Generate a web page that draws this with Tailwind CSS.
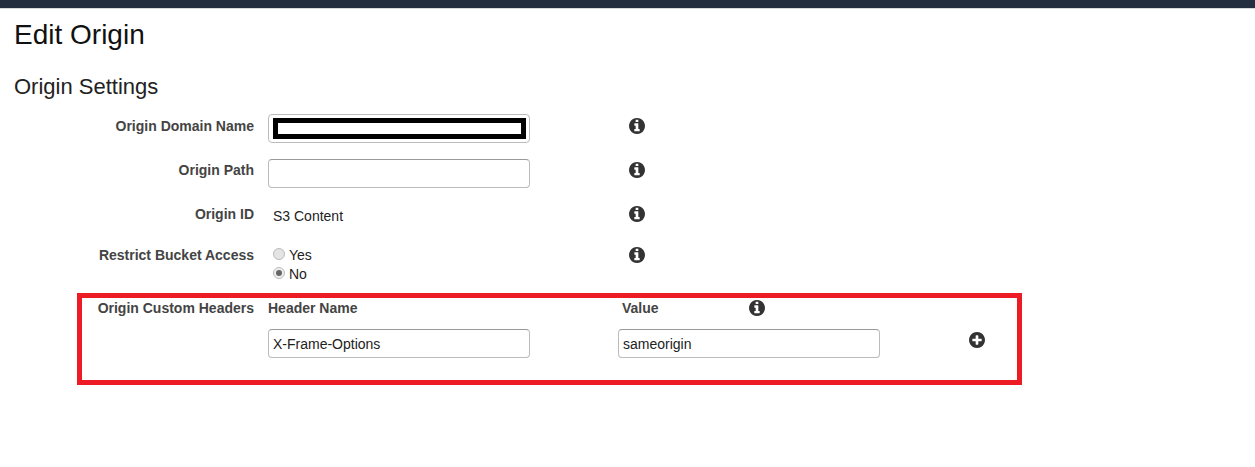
<!DOCTYPE html>
<html lang="en">
<head>
  <meta charset="UTF-8" />
  <title>Edit Origin</title>
  <script src="https://cdn.jsdelivr.net/npm/@tailwindcss/browser@4"></script>
</head>
<body class="bg-white font-['Liberation_Sans',Arial,sans-serif] text-[#222]">
  <div class="h-2 bg-[#232f3e] border-b border-[#d5dbdb] box-content"></div>

  <main class="h-[458px] overflow-hidden">
    <h1 class="pl-[14px] pt-[9px] text-[28px] leading-[34px] text-[#111]">Edit Origin</h1>
    <h2 class="pl-[14px] pt-[22px] text-[22px] leading-[26px] text-[#222]">Origin Settings</h2>

    <!-- Origin Domain Name -->
    <div class="flex items-start h-[45px] mt-[14px]">
      <label class="w-[254px] text-right text-sm font-bold text-[#444] leading-[24px]">Origin Domain Name</label>
      <div class="ml-[14px] w-[262px] h-[29px] rounded border border-[#bbb] p-[3px] pl-[4px]">
        <div class="w-[253px] h-[21px] border-[5px] border-black bg-white"></div>
      </div>
      <svg class="ml-[99px] mt-[4px] w-4 h-4 fill-[#333]" viewBox="128 128 1536 1536"><path d="M1152 1376v-160q0-14-9-23t-23-9h-96v-512q0-14-9-23t-23-9h-320q-14 0-23 9t-9 23v160q0 14 9 23t23 9h96v320h-96q-14 0-23 9t-9 23v160q0 14 9 23t23 9h448q14 0 23-9t9-23zm-128-896v-160q0-14-9-23t-23-9h-192q-14 0-23 9t-9 23v160q0 14 9 23t23 9h192q14 0 23-9t9-23zm640 416q0 209-103 385.5t-279.5 279.5-385.5 103-385.5-103-279.5-279.5-103-385.5 103-385.5 279.5-279.5 385.5-103 385.5 103 279.5 279.5 103 385.5z"/></svg>
    </div>

    <!-- Origin Path -->
    <div class="flex items-start h-[44px]">
      <label class="w-[254px] text-right text-sm font-bold text-[#444] leading-[23px]">Origin Path</label>
      <input class="ml-[14px] w-[262px] h-[29px] rounded border border-[#bbb] border-t-[#999] px-1 text-sm" />
      <svg class="ml-[99px] mt-[3px] w-4 h-4 fill-[#333]" viewBox="128 128 1536 1536"><path d="M1152 1376v-160q0-14-9-23t-23-9h-96v-512q0-14-9-23t-23-9h-320q-14 0-23 9t-9 23v160q0 14 9 23t23 9h96v320h-96q-14 0-23 9t-9 23v160q0 14 9 23t23 9h448q14 0 23-9t9-23zm-128-896v-160q0-14-9-23t-23-9h-192q-14 0-23 9t-9 23v160q0 14 9 23t23 9h192q14 0 23-9t9-23zm640 416q0 209-103 385.5t-279.5 279.5-385.5 103-385.5-103-279.5-279.5-103-385.5 103-385.5 279.5-279.5 385.5-103 385.5 103 279.5 279.5 103 385.5z"/></svg>
    </div>

    <!-- Origin ID -->
    <div class="flex items-start h-[40px]">
      <label class="w-[254px] text-right text-sm font-bold text-[#444] leading-[23px]">Origin ID</label>
      <span class="ml-[19px] w-[257px] text-sm leading-[27px] text-[#222]">S3 Content</span>
      <svg class="ml-[99px] mt-[3px] w-4 h-4 fill-[#333]" viewBox="128 128 1536 1536"><path d="M1152 1376v-160q0-14-9-23t-23-9h-96v-512q0-14-9-23t-23-9h-320q-14 0-23 9t-9 23v160q0 14 9 23t23 9h96v320h-96q-14 0-23 9t-9 23v160q0 14 9 23t23 9h448q14 0 23-9t9-23zm-128-896v-160q0-14-9-23t-23-9h-192q-14 0-23 9t-9 23v160q0 14 9 23t23 9h192q14 0 23-9t9-23zm640 416q0 209-103 385.5t-279.5 279.5-385.5 103-385.5-103-279.5-279.5-103-385.5 103-385.5 279.5-279.5 385.5-103 385.5 103 279.5 279.5 103 385.5z"/></svg>
    </div>

    <!-- Restrict Bucket Access -->
    <div class="flex items-start h-[50px] pt-[3px]">
      <label class="w-[254px] text-right text-sm font-bold text-[#444] leading-[18px]">Restrict Bucket Access</label>
      <div class="ml-[19px] w-[257px] -mt-px text-sm text-[#222]">
        <div class="flex items-center h-[19px] gap-[4px]">
          <span class="w-3 h-3 mb-px rounded-full border border-[#bbb] bg-[#e4e4e4]"></span>Yes
        </div>
        <div class="flex items-center h-[19px] gap-[4px]">
          <span class="w-3 h-3 mb-px rounded-full border border-[#bbb] bg-[#eee] flex items-center justify-center"><span class="w-[6px] h-[6px] rounded-full bg-[#666]"></span></span>No
        </div>
      </div>
      <svg class="ml-[99px] mt-px w-4 h-4 fill-[#333]" viewBox="128 128 1536 1536"><path d="M1152 1376v-160q0-14-9-23t-23-9h-96v-512q0-14-9-23t-23-9h-320q-14 0-23 9t-9 23v160q0 14 9 23t23 9h96v320h-96q-14 0-23 9t-9 23v160q0 14 9 23t23 9h448q14 0 23-9t9-23zm-128-896v-160q0-14-9-23t-23-9h-192q-14 0-23 9t-9 23v160q0 14 9 23t23 9h192q14 0 23-9t9-23zm640 416q0 209-103 385.5t-279.5 279.5-385.5 103-385.5-103-279.5-279.5-103-385.5 103-385.5 279.5-279.5 385.5-103 385.5 103 279.5 279.5 103 385.5z"/></svg>
    </div>

    <!-- Origin Custom Headers, with the red annotation box -->
    <div class="ml-[77px] w-[945px] h-[92px] border-[5px] border-[#ed1c24] flex">
      <label class="w-[172px] text-right text-sm font-bold text-[#444] leading-[20px]">Origin Custom Headers</label>
      <div class="ml-[14px] w-[262px]">
        <div class="h-[31px] text-sm font-bold text-[#444] leading-[20px]">Header Name</div>
        <input value="X-Frame-Options" class="w-[262px] h-[29px] rounded border border-[#bbb] border-t-[#999] px-1 text-sm text-[#222]" />
      </div>
      <div class="ml-[88px] w-[262px]">
        <div class="h-[31px] flex items-start text-sm font-bold text-[#444] leading-[20px]">
          <span class="ml-[4px] w-[127px]">Value</span>
          <svg class="mt-[2px] w-4 h-4 fill-[#333]" viewBox="128 128 1536 1536"><path d="M1152 1376v-160q0-14-9-23t-23-9h-96v-512q0-14-9-23t-23-9h-320q-14 0-23 9t-9 23v160q0 14 9 23t23 9h96v320h-96q-14 0-23 9t-9 23v160q0 14 9 23t23 9h448q14 0 23-9t9-23zm-128-896v-160q0-14-9-23t-23-9h-192q-14 0-23 9t-9 23v160q0 14 9 23t23 9h192q14 0 23-9t9-23zm640 416q0 209-103 385.5t-279.5 279.5-385.5 103-385.5-103-279.5-279.5-103-385.5 103-385.5 279.5-279.5 385.5-103 385.5 103 279.5 279.5 103 385.5z"/></svg>
        </div>
        <input value="sameorigin" class="w-[262px] h-[29px] rounded border border-[#bbb] border-t-[#999] px-1 text-sm text-[#222]" />
      </div>
      <svg class="ml-[89px] mt-[34px] w-4 h-4 fill-[#333]" viewBox="128 128 1536 1536"><path d="M1344 960v-128q0-26-19-45t-45-19h-256v-256q0-26-19-45t-45-19h-128q-26 0-45 19t-19 45v256h-256q-26 0-45 19t-19 45v128q0 26 19 45t45 19h256v256q0 26 19 45t45 19h128q26 0 45-19t19-45v-256h256q26 0 45-19t19-45zm320-64q0 209-103 385.5t-279.5 279.5-385.5 103-385.5-103-279.5-279.5-103-385.5 103-385.5 279.5-279.5 385.5-103 385.5 103 279.5 279.5 103 385.5z"/></svg>
    </div>
  </main>
</body>
</html>
